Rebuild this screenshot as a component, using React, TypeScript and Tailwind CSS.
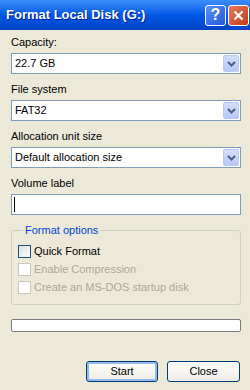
import React from "react";

const font = { fontFamily: '"Liberation Sans", Arial, sans-serif' };

const Chevron = () => (
    <svg width="9" height="6" viewBox="0 0 9 6">
        <polyline points="1,1 4.5,4.5 8,1" fill="none" stroke="#4D6185" strokeWidth="2" />
    </svg>
);

const Combo = ({ value }: { value: string }) => (
    <div className="flex h-[21px] items-center border border-[#7F9DB9] bg-white p-[1px]">
        <div className="flex-1 pl-[2px] text-[11px] leading-[13px] text-black">{value}</div>
        <div className="flex h-full w-[16px] items-center justify-center rounded-[2px] border border-[#B9C9F3] bg-gradient-to-b from-[#D3DEFB] to-[#B6C8F6]">
            <Chevron />
        </div>
    </div>
);

const Field = ({ label, children, first }: { label: string; children: React.ReactNode; first?: boolean }) => (
    <div className={first ? "mt-[6px]" : "mt-[9px]"}>
        <div className="h-[13px] text-[11px] leading-[13px] text-black">{label}</div>
        <div className="mt-[4px]">{children}</div>
    </div>
);

const Check = ({ label, enabled }: { label: string; enabled?: boolean }) => (
    <div className="flex h-[13px] items-center gap-[3px]">
        {enabled ? (
            <div className="h-[13px] w-[13px] border border-[#1C5180] bg-gradient-to-br from-[#DCDCD7] to-white" />
        ) : (
            <div className="h-[13px] w-[13px] border border-[#CAC8BB] bg-white" />
        )}
        <span className={`text-[11px] leading-[13px] ${enabled ? "text-black" : "text-[#ACA899]"}`}>{label}</span>
    </div>
);

export default function App() {
    return (
        <div className="h-[390px] w-[250px] overflow-hidden bg-[#ECE9D8]" style={font}>
            {/* Title bar */}
            <div className="flex h-[30px] items-center bg-gradient-to-b from-[#3D8DF8] via-[#0058E6] to-[#0043C4] pl-[6px] pr-[1px]">
                <div className="flex-1 text-[13px] font-bold text-white [text-shadow:1px_1px_0_#0A1E8C]">
                    Format Local Disk (G:)
                </div>
                <div className="flex gap-[2px]">
                    <div className="flex h-[21px] w-[21px] items-center justify-center rounded-[3px] border border-white bg-gradient-to-br from-[#5A90F5] to-[#1E58DA] text-[16px] font-bold leading-none text-white">
                        ?
                    </div>
                    <div className="flex h-[21px] w-[21px] items-center justify-center rounded-[3px] border border-white bg-gradient-to-br from-[#E8795A] to-[#C43A14]">
                        <svg width="11" height="11" viewBox="0 0 11 11">
                            <path d="M1.5 1.5 L9.5 9.5 M9.5 1.5 L1.5 9.5" stroke="white" strokeWidth="2.2" />
                        </svg>
                    </div>
                </div>
            </div>

            {/* Body */}
            <div className="flex flex-col pl-[11px] pr-[9px]">
                <Field label="Capacity:" first>
                    <Combo value="22.7 GB" />
                </Field>
                <Field label="File system">
                    <Combo value="FAT32" />
                </Field>
                <Field label="Allocation unit size">
                    <Combo value="Default allocation size" />
                </Field>
                <Field label="Volume label">
                    <div className="flex h-[21px] items-center border border-[#7F9DB9] bg-white pl-[2px]">
                        <div className="h-[15px] w-[1px] bg-black" />
                    </div>
                </Field>

                <fieldset className="mt-[9px] rounded-[3px] border border-[#D0D0BF] pb-[10px] pl-[6px]">
                    <legend className="ml-[5px] px-[2px] text-[11px] leading-[13px] text-[#0046D5]">Format options</legend>
                    <div className="mt-[8px] flex flex-col gap-[5px]">
                        <Check label="Quick Format" enabled />
                        <Check label="Enable Compression" />
                        <Check label="Create an MS-DOS startup disk" />
                    </div>
                </fieldset>

                <div className="mt-[14px] h-[13px] rounded-[2px] border border-[#7A7A7A] bg-white" />

                <div className="mt-[29px] flex justify-end gap-[9px] pr-[1px]">
                    <div className="flex h-[21px] w-[72px] items-center justify-center rounded-[3px] border border-[#003C74] bg-gradient-to-b from-white to-[#ECEBE6] shadow-[inset_0_0_0_2px_#97B8F0] text-[11px] text-black">
                        Start
                    </div>
                    <div className="flex h-[21px] w-[73px] items-center justify-center rounded-[3px] border border-[#003C74] bg-gradient-to-b from-white to-[#ECEBE6] text-[11px] text-black">
                        Close
                    </div>
                </div>
            </div>
        </div>
    );
}
